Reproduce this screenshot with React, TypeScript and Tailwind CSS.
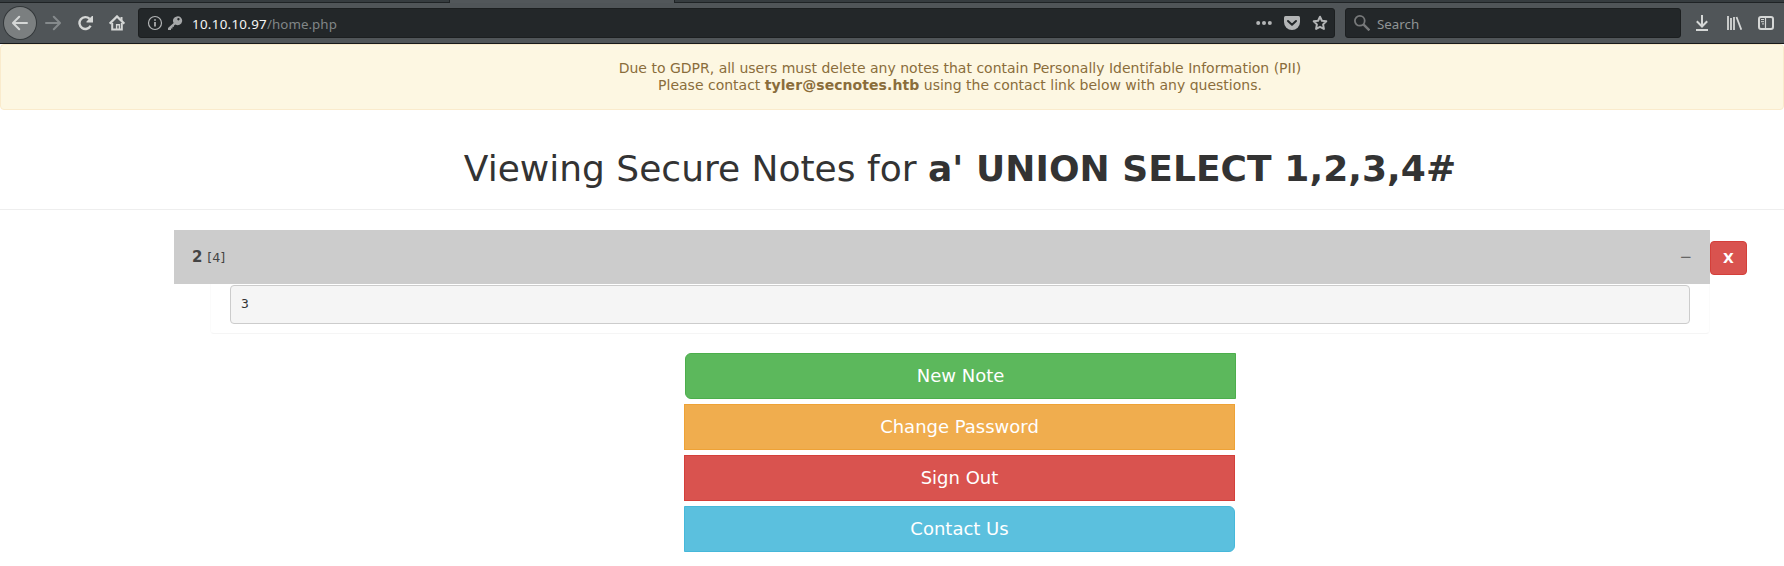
import type { ReactNode } from 'react';

type IconProps = { className?: string; children: ReactNode };

function Icon({ className = '', children }: IconProps) {
  return (
    <svg viewBox="0 0 16 16" className={`h-4 w-4 shrink-0 ${className}`} fill="none" stroke="currentColor">
      {children}
    </svg>
  );
}

function TabStrip() {
  return (
    <div className="flex h-[3px] bg-[#52575a]">
      <div className="h-full w-[450px] border-b border-r border-[#1f2325] bg-[#363c3f]" />
      <div className="h-full w-[224px]" />
      <div className="h-full flex-1 border-b border-l border-[#1f2325] bg-[#363c3f]" />
    </div>
  );
}

function Toolbar() {
  return (
    <div className="flex h-[41px] items-center border-b border-[#17191a] bg-[#505558] text-[#d5d7d6]">
      <div className="ml-1 flex h-8 w-8 items-center justify-center rounded-full bg-[#7b7f80] ring-1 ring-[#33383a]">
        <Icon>
          <path d="M15 8H1.5M7.2 1.8L1 8L7.2 14.2" strokeWidth="2" strokeLinecap="round" strokeLinejoin="round" />
        </Icon>
      </div>
      <Icon className="ml-[9px] text-[#858a8c]">
        <path d="M1 8H14.5M8.8 1.8L15 8L8.8 14.2" strokeWidth="2" strokeLinecap="round" strokeLinejoin="round" />
      </Icon>
      <Icon className="ml-[17px]">
        <path d="M12.6 10.8A5.9 5.9 0 1 1 11.6 3.9" strokeWidth="2.4" />
        <path d="M15 1V7.5H8.5V6.5L14 1Z" fill="currentColor" stroke="none" />
      </Icon>
      <Icon className="ml-[15px]">
        <path d="M0.7 8.6L8 1.4L15.3 8.6" strokeWidth="2.2" />
        <path d="M3.2 8V14.4H12.8V8" strokeWidth="2" />
        <path d="M7.6 14V9.8H10.4V14" strokeWidth="1.4" />
        <path d="M11.5 2H13.5V6L11.5 4Z" fill="currentColor" stroke="none" />
      </Icon>
      <div className="ml-[13px] flex h-[30px] w-[1197px] items-center rounded-[3px] border border-[#1c1f20] bg-[#232729] font-['Noto_Sans',sans-serif] text-[13.33px] text-[#b3b5b6]">
        <Icon className="ml-2">
          <circle cx="8" cy="8" r="6.5" strokeWidth="1.2" />
          <path d="M8 7V11.6M8 4.2V5.8" strokeWidth="1.7" />
        </Icon>
        <Icon className="ml-1 text-[#a5a7a8]">
          <path
            fillRule="evenodd"
            d="M9.8 1.4A4.4 4.4 0 0 0 6.6 8L1 13V15H4V13.4H5.5V11.8H7V10.4L8.4 9.4A4.4 4.4 0 1 0 9.8 1.4ZM11.5 3A1.2 1.2 0 1 1 11.4 5.4A1.2 1.2 0 0 1 11.5 3Z"
            fill="currentColor"
            stroke="none"
          />
        </Icon>
        <span className="ml-[9px] flex-1 pt-px leading-[18px] tracking-[0.05px] text-[#818687]">
          <span className="tracking-[0.3px] text-[#f4f4f4]">10.10.10.97</span>/home.php
        </span>
        <Icon>
          <g fill="currentColor" stroke="none">
            <circle cx="2.2" cy="8" r="2" />
            <circle cx="8" cy="8" r="2" />
            <circle cx="13.8" cy="8" r="2" />
          </g>
        </Icon>
        <Icon className="ml-3">
          <path d="M1.5 1H14.5Q16 1 16 2.5V7A8 8 0 0 1 0 7V2.5Q0 1 1.5 1Z" fill="currentColor" stroke="none" />
          <path d="M4 6L8 9.8L12 6" stroke="#232729" strokeWidth="2" strokeLinecap="round" strokeLinejoin="round" />
        </Icon>
        <Icon className="ml-3 mr-[6px]">
          <path
            d="M8 1.7L9.9 5.7L14.3 6.3L11.1 9.4L11.9 13.9L8 11.8L4.1 13.9L4.9 9.4L1.7 6.3L6.1 5.7Z"
            strokeWidth="2"
            strokeLinejoin="round"
          />
        </Icon>
      </div>
      <div className="ml-[10px] flex h-[30px] w-[336px] items-center rounded-[3px] border border-[#1c1f20] bg-[#232729] font-['Noto_Sans',sans-serif] text-[13.33px] text-[#909495]">
        <Icon className="ml-2 text-[#77797a]">
          <circle cx="5.8" cy="5.8" r="4.9" strokeWidth="1.8" />
          <path d="M9.4 9.4L15.4 15.4" strokeWidth="2.4" />
        </Icon>
        <span className="ml-[7px] pt-px leading-[18px]">Search</span>
      </div>
      <Icon className="ml-[13px]">
        <path d="M8 0V11.5M2.8 6.3L8 11.5L13.2 6.3" strokeWidth="2" />
        <path d="M2 15H14" strokeWidth="2" />
      </Icon>
      <Icon className="ml-[16px]">
        <path d="M2 1V15M5 3V15M8 2V15M10.5 2L15.3 14.7" strokeWidth="1.8" />
      </Icon>
      <Icon className="ml-[16px]">
        <rect x="1" y="2" width="14" height="12" rx="2" strokeWidth="2" />
        <path d="M7.5 2V14" strokeWidth="1.2" />
        <path d="M3 4.5H6M3 6.7H6M4 8.9H6" strokeWidth="1" />
      </Icon>
    </div>
  );
}

const actions = [
  { label: 'New Note', style: 'ml-[1px] mr-[-1px] rounded-l-[6px] border-[#4cae4c] bg-[#5cb85c]' },
  { label: 'Change Password', style: 'border-[#eea236] bg-[#f0ad4e]' },
  { label: 'Sign Out', style: 'border-[#d43f3a] bg-[#d9534f]' },
  { label: 'Contact Us', style: 'rounded-r-[6px] border-[#46b8da] bg-[#5bc0de]' },
];

function Note() {
  return (
    <section className="ml-[174px] mt-5">
      <div className="flex items-center">
        <div className="flex h-[54px] w-[1536px] items-center justify-between bg-[#ccc] pl-[18px] pr-[18px] text-[#444]">
          <div className="text-[15px] leading-[18px]">
            <b>2</b> <span className="text-[12.75px]">[4]</span>
          </div>
          <span className="text-[15px] leading-[18px] text-[#666]">{'\u2212'}</span>
        </div>
        <button className="mt-[2px] h-[34px] w-[37px] rounded-[4px] border border-[#d43f3a] bg-[#d9534f] text-[14px] font-bold leading-5 text-white">
          X
        </button>
      </div>
      <div className="ml-[36px] h-[50px] w-[1500px] rounded-b-[4px] border border-t-0 border-[#fbfbfb] border-b-[#f5f5f5] px-[19px] pt-px">
        <pre className="h-[39px] rounded-[4px] border border-[#ccc] bg-[#f5f5f5] px-[10px] py-[9px] font-['DejaVu_Sans_Mono',monospace] text-[13px] leading-[18px] text-[#333]">
          3
        </pre>
      </div>
    </section>
  );
}

export default function App() {
  return (
    <div className="h-[566px] overflow-hidden bg-white font-['DejaVu_Sans',sans-serif] text-[#333]">
      <TabStrip />
      <Toolbar />
      <div className="h-[66px] rounded-[4px] border border-[#faebcc] bg-[#fdf7e2] pl-[136px] pt-[15px] text-center text-[14px] leading-[17px] text-[#8a6d3b]">
        <p>Due to GDPR, all users must delete any notes that contain Personally Identifable Information (PII)</p>
        <p>
          Please contact <b className="tracking-[0.07px]">tyler@secnotes.htb</b> using the contact link below with any
          questions.
        </p>
      </div>
      <header className="h-[100px] border-b border-[#eee] pl-[136px] pt-[39px] text-center">
        <h1 className="text-[36px] leading-[40px]">
          Viewing Secure Notes for <b className="tracking-[0.06px]">a' UNION SELECT 1,2,3,4#</b>
        </h1>
      </header>
      <Note />
      <nav className="ml-[684px] mt-[19px] flex w-[551px] flex-col gap-[5px]">
        {actions.map(({ label, style }) => (
          <button key={label} className={`h-[46px] border text-[18px] leading-6 text-white ${style}`}>
            {label}
          </button>
        ))}
      </nav>
    </div>
  );
}
